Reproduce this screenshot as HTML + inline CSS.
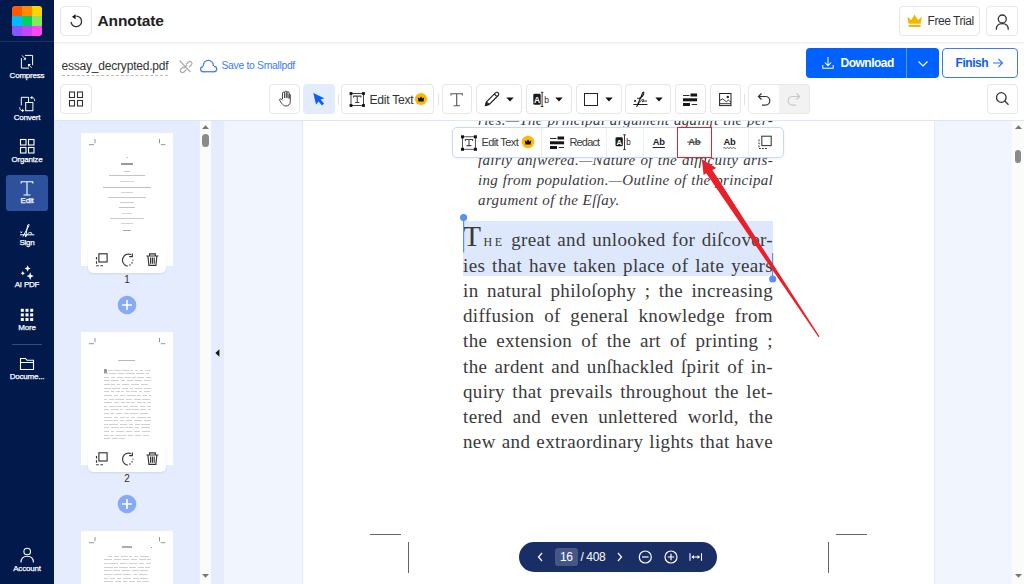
<!DOCTYPE html>
<html><head><meta charset="utf-8"><style>
*{box-sizing:border-box;margin:0;padding:0}
html,body{width:1024px;height:584px;overflow:hidden;background:#fff;font-family:"Liberation Sans",sans-serif;position:relative}
.a{position:absolute}
svg{position:absolute;overflow:visible}
#side{left:0;top:0;width:54px;height:584px;background:#01194b}
.logo{left:12px;top:6px;width:30px;height:30px;border-radius:3px;overflow:hidden}
.logo i{position:absolute;width:10px;height:10px}
.sl{position:absolute;left:0;width:54px;text-align:center;color:#fff;font-size:8px;line-height:10px;letter-spacing:-0.2px;-webkit-text-stroke:0.25px #fff}
.btn{position:absolute;border:1px solid #e6e6e6;border-radius:4px;background:#fff}
.t{position:absolute;white-space:nowrap}
.body{position:absolute;left:160px;width:310px;white-space:nowrap;font-family:"Liberation Serif",serif;font-size:19px;letter-spacing:0.35px;color:#3a3a3a;text-align:justify;text-align-last:justify;line-height:25px}
.ital{position:absolute;left:175px;width:295px;white-space:nowrap;font-family:"Liberation Serif",serif;font-style:italic;font-size:15px;letter-spacing:0.3px;color:#3a3a3a;text-align:justify;text-align-last:justify;line-height:20px}
</style></head><body>
<div id="side" class="a">
<div class="logo a">
<i style="left:0;top:0;background:#ff5a00"></i><i style="left:10px;top:0;background:#ff8c00"></i><i style="left:20px;top:0;background:#ffd400"></i>
<i style="left:0;top:10px;background:#00bcff"></i><i style="left:10px;top:10px;background:#00d062"></i><i style="left:20px;top:10px;background:#86e85a"></i>
<i style="left:0;top:20px;background:#8a55ff"></i><i style="left:10px;top:20px;background:#c845ff"></i><i style="left:20px;top:20px;background:#ff45f5"></i>
</div>
<div class="a" style="left:0;top:41px;width:54px;height:1px;background:#1f3261"></div>
<div class="a" style="left:6px;top:175px;width:42px;height:36px;border-radius:3px;background:#2e519d"></div>
<svg width="54" height="584" style="left:0;top:0" stroke="#fff" fill="none" stroke-width="1.1">
<!-- compress -->
<path d="M25 55.4H32.6V65.2M21.4 58.2V68.1H29" stroke-width="1"/>
<path d="M22.1 55.4L25.4 59.2" stroke-width="0.9"/><path d="M23.2 59.8H25.8V57.2Z" fill="#fff" stroke="none"/>
<path d="M31.7 67.8L28.4 64.5" stroke-width="0.9"/><path d="M30.9 64H28V66.9Z" fill="#fff" stroke="none"/>
<!-- convert -->
<path d="M21.3 105.4V97.3H28.6V102.5" stroke-width="1"/>
<rect x="25.7" y="102.5" width="7.2" height="8.2" stroke-width="1"/>
<path d="M34.6 101C34.6 98.7 33.8 97.6 32.2 97.6" stroke-width="0.9"/><path d="M32.3 95.9V99.3L29.9 97.6Z" fill="#fff" stroke="none"/>
<path d="M19.7 107.2C19.7 109.5 20.5 110.6 22.1 110.6" stroke-width="0.9"/><path d="M22 108.9V112.3L24.4 110.6Z" fill="#fff" stroke="none"/>
<!-- organize -->
<rect x="20.5" y="139.5" width="5.5" height="5.5"/><rect x="28.5" y="139.5" width="5.5" height="5.5"/>
<rect x="20.5" y="147.5" width="5.5" height="5.5"/><rect x="28.5" y="147.5" width="5.5" height="5.5"/>
<!-- edit T -->
<path d="M21.2 183.5V181.8H32.8V183.5M27 181.8V195M23.5 195H30.5"/>
<!-- sign -->
<path d="M20 234.8H34.3" stroke-width="1"/>
<path d="M23 236.5C25 233 27 229 29 225.5C29.5 224.3 28.3 223.8 27.8 225C27 228 26.5 233 25.5 237C27 234 29 232 31 232.5C32.5 233 31.5 234.5 30.5 234" stroke-width="1"/>
<path d="M20.5 231.5L22 233M22 231.5L20.5 233" stroke-width="0.8"/>
<!-- more dots -->
<g fill="#fff" stroke="none">
<rect x="20.8" y="308.8" width="3" height="3"/><rect x="25.5" y="308.8" width="3" height="3"/><rect x="30.2" y="308.8" width="3" height="3"/>
<rect x="20.8" y="313.4" width="3" height="3"/><rect x="25.5" y="313.4" width="3" height="3"/><rect x="30.2" y="313.4" width="3" height="3"/>
<rect x="20.8" y="318" width="3" height="3"/><rect x="25.5" y="318" width="3" height="3"/><rect x="30.2" y="318" width="3" height="3"/>
<!-- sparkles -->
<path d="M27.6 265.3L28.5 267.6L30.6 268.5L28.5 269.4L27.6 271.7L26.7 269.4L24.6 268.5L26.7 267.6Z"/>
<path d="M22.8 271L23.5 272.6L25 273.3L23.5 274L22.8 275.6L22.1 274L20.6 273.3L22.1 272.6Z"/>
<path d="M30.2 272.3L31.2 275L33.8 276.1L31.2 277.2L30.2 279.9L29.2 277.2L26.6 276.1L29.2 275Z"/>
</g>
<!-- folder -->
<path d="M20.5 369.5V358.5H25.5L27 360.3H33.5V369.5Z M20.5 362.5H33.5"/>
<!-- account -->
<circle cx="27.2" cy="551.5" r="3.3"/>
<path d="M21 562.5C21 558.5 23.5 556.3 27.2 556.3C30.9 556.3 33.4 558.5 33.4 562.5"/>
</svg>
<div class="a" style="left:12px;top:344px;width:30px;height:1px;background:#3a4a75"></div>
<div class="sl" style="top:70.6px">Compress</div>
<div class="sl" style="top:112.6px">Convert</div>
<div class="sl" style="top:154.8px">Organize</div>
<div class="sl" style="top:196.2px">Edit</div>
<div class="sl" style="top:238.4px">Sign</div>
<div class="sl" style="top:280.4px">AI PDF</div>
<div class="sl" style="top:322.7px">More</div>
<div class="sl" style="top:371.9px">Docume...</div>
<div class="sl" style="top:563.7px">Account</div>
</div>
<div class="a" style="left:54px;top:0;width:970px;height:43px;background:#fff;border-bottom:1px solid #efefef"></div>
<div class="a" style="left:54px;top:43px;width:970px;height:3px;background:linear-gradient(#f6f6f6,#fff)"></div>
<div class="btn" style="left:60px;top:6px;width:32px;height:30px"></div>
<svg width="32" height="30" style="left:60px;top:6px">
<path d="M11 15.9A5.3 5.3 0 1 0 16.2 10.1" stroke="#333" stroke-width="1.3" fill="none"/>
<path d="M12 10.8L15.6 8.3V13.3Z" fill="#111"/></svg>
<div class="t" style="left:97.5px;top:10.6px;font-size:15.5px;line-height:20px;font-weight:bold;letter-spacing:-0.1px;color:#222">Annotate</div>
<div class="btn" style="left:899px;top:6px;width:81px;height:30px"></div>
<svg width="16" height="14" style="left:907px;top:14px">
<path d="M0.3 2.8L4.3 6L7.6 0.6L10.9 6L14.9 2.8L13.6 9.8H1.6Z" fill="#f7b500"/>
<rect x="1.6" y="10.9" width="12" height="2.1" fill="#f7b500"/></svg>
<div class="t" style="left:927.5px;top:13px;font-size:12px;line-height:16px;letter-spacing:-0.45px;color:#333">Free Trial</div>
<div class="btn" style="left:986px;top:6px;width:32px;height:30px"></div>
<svg width="32" height="30" style="left:986px;top:6px" stroke="#333" stroke-width="1.3" fill="none">
<circle cx="16.3" cy="13" r="4"/><path d="M10.3 23.8C10.3 20 12.6 17.7 16.3 17.7C20 17.7 22.3 20 22.3 23.8"/></svg>
<div class="t" style="left:61.5px;top:58px;font-size:12px;line-height:16px;letter-spacing:-0.2px;color:#333">essay_decrypted.pdf</div>
<div class="a" style="left:62px;top:75px;width:106px;height:0;border-top:1px dashed #bbb"></div>
<svg width="16" height="16" style="left:177px;top:58px" stroke="#aaa" stroke-width="1.1" fill="none">
<path d="M2.5 2.5L13.5 14"/>
<path d="M6.5 8.5L4 11A2 2 0 0 0 7 14L9.5 11.5"/><path d="M9 6.5L11.5 4A2 2 0 0 1 14.3 7L12 9.3"/><path d="M6.5 10.5L10 7"/></svg>
<svg width="20" height="16" style="left:199px;top:59.3px"><g fill="#3b7cf8"><circle cx="9.3" cy="6.4" r="5.65"/><circle cx="15.0" cy="10.0" r="3.35"/><circle cx="4.2" cy="10.2" r="3.15"/><rect x="4.2" y="7" width="10.8" height="6.35"/></g><g fill="#fff"><circle cx="9.3" cy="6.4" r="4.4"/><circle cx="15.0" cy="10.0" r="2.1"/><circle cx="4.2" cy="10.2" r="1.9"/><rect x="4.2" y="7" width="10.8" height="5.1"/></g></svg>
<div class="t" style="left:221.5px;top:59px;font-size:10.4px;line-height:14px;letter-spacing:-0.32px;color:#3b7cf8">Save to Smallpdf</div>
<div class="a" style="left:806px;top:48px;width:133px;height:30px;border-radius:4px;background:#0061fe"></div>
<div class="a" style="left:906px;top:48px;width:1px;height:30px;background:#5b95ff"></div>
<svg width="14" height="14" style="left:821px;top:56px" stroke="#fff" stroke-width="1.05" fill="none">
<path d="M7 1V9.5M3.8 6.5L7 9.7L10.2 6.5M1.8 9V12.3H12.2V9"/></svg>
<div class="t" style="left:840.5px;top:55px;font-size:12px;line-height:16px;font-weight:bold;letter-spacing:-0.5px;color:#fff">Download</div>
<svg width="12" height="8" style="left:917px;top:60px" stroke="#fff" stroke-width="1.2" fill="none"><path d="M1.5 1.5L6 6L10.5 1.5"/></svg>
<div class="a" style="left:942px;top:48px;width:76px;height:30px;border-radius:4px;border:1px solid #3d7af6;background:#fff"></div>
<div class="t" style="left:955.5px;top:55px;font-size:12px;line-height:16px;font-weight:bold;letter-spacing:-0.45px;color:#0d5cf0">Finish</div>
<svg width="12" height="10" style="left:991.8px;top:57.5px" stroke="#2f6ff5" stroke-width="1.1" fill="none"><path d="M1 5H10.5M6.5 1L10.5 5L6.5 9"/></svg>
<div class="btn" style="left:60px;top:84px;width:32px;height:30px;"></div>
<svg width="32" height="30" style="left:60px;top:84px" stroke="#333" stroke-width="1.1" fill="none">
<rect x="9.5" y="8" width="5" height="5.5"/><rect x="17.5" y="8" width="5" height="5.5"/>
<rect x="9.5" y="16.5" width="5" height="5.5"/><rect x="17.5" y="16.5" width="5" height="5.5"/></svg>
<div class="btn" style="left:268.5px;top:84px;width:31.0px;height:30px;"></div>
<svg width="31" height="30" style="left:268.5px;top:84px" stroke="#444" stroke-width="1" fill="none">
<path d="M13.5 15V9.2A1.1 1.1 0 0 1 15.7 9.2V14M15.7 14V8.2A1.1 1.1 0 0 1 17.9 8.2V14M17.9 14V8.8A1.1 1.1 0 0 1 20.1 8.8V14.5M20.1 14.5V10.5A1.1 1.1 0 0 1 21.3 10.5V17.5C21.3 20.5 19.3 22 17 22C15 22 14 21 12.5 19.2L10.6 16.2A1.1 1.1 0 0 1 12.3 15L13.5 16.3"/></svg>
<div class="a" style="left:303px;top:84px;width:31.5px;height:30px;border-radius:4px;background:#e3ecfd"></div>
<svg width="32" height="30" style="left:303px;top:84px"><path d="M10.3 9L21.3 14.2L17.6 15.6L21 19.6L19 21.5L15.6 17.5L13 20.5Z" fill="#0a5efc"/></svg>
<div class="a" style="left:337.5px;top:93.5px;width:1px;height:11.5px;background:#e2e2e2"></div>
<div class="btn" style="left:341px;top:84px;width:93px;height:30px;"></div>
<svg width="20" height="16" style="left:348px;top:91px">
<rect x="3" y="2.5" width="12.5" height="12" stroke="#333" stroke-width="0.9" fill="none"/>
<g fill="#111"><rect x="1.6" y="1.1" width="2.8" height="2.8"/><rect x="14.1" y="1.1" width="2.8" height="2.8"/><rect x="1.6" y="13.1" width="2.8" height="2.8"/><rect x="14.1" y="13.1" width="2.8" height="2.8"/></g>
<path d="M5.5 6.6V5.1H13V6.6M9.25 5.1V11.5M7.1 11.5H11.4" stroke="#444" stroke-width="1.05" fill="none"/></svg>
<div class="t" style="left:369.5px;top:91.5px;font-size:12.2px;line-height:16px;letter-spacing:-0.3px;color:#333">Edit Text</div>
<svg width="14" height="14" style="left:414px;top:92.3px"><circle cx="7" cy="7" r="6.1" fill="#ffb700"/>
<path d="M3.8 5.2L5.4 6.6L7 4.4L8.6 6.6L10.2 5.2L9.6 9.6H4.4Z" fill="#111"/></svg>
<div class="a" style="left:437.5px;top:93.5px;width:1px;height:11.5px;background:#e2e2e2"></div>
<div class="btn" style="left:441.5px;top:84px;width:30.5px;height:30px;"></div>
<svg width="31" height="30" style="left:441.5px;top:84px" stroke="#555" stroke-width="1.1" fill="none">
<path d="M9 11.5V9.7H20.4V11.5M14.7 9.7V21.7M11.6 21.7H18"/></svg>
<div class="btn" style="left:475.5px;top:84px;width:46.0px;height:30px;"></div>
<svg width="16" height="16" style="left:483.5px;top:91px" stroke="#222" stroke-width="1.1" fill="none">
<path d="M1.5 14.5L2.5 10.8L11.5 1.8A1.4 1.4 0 0 1 14.2 4.5L5.2 13.5Z M10.3 3L13 5.7 M2.5 10.8L5.2 13.5"/><path d="M1.5 14.5L2.2 12L4 13.8Z" fill="#222"/></svg>
<svg width="10" height="6" style="left:504.5px;top:97.1px"><path d="M1.3 0.5H8.7L5 4.5Z" fill="#111"/></svg>
<div class="btn" style="left:525.5px;top:84px;width:46.0px;height:30px;"></div>
<svg width="20" height="18" style="left:532px;top:91px">
<rect x="1.3" y="2.8" width="7.4" height="11" rx="1.3" fill="#1a1a1a"/>
<text x="5" y="11.8" font-family="Liberation Sans" font-weight="bold" font-size="8.5" fill="#fff" text-anchor="middle">A</text>
<path d="M10.1 1.3V15.5M8.8 1.3H11.4M8.8 15.5H11.4" stroke="#222" stroke-width="0.9" fill="none"/>
<text x="12.3" y="11.8" font-family="Liberation Sans" font-size="8.5" fill="#222">b</text></svg>
<svg width="10" height="6" style="left:554.2px;top:97.1px"><path d="M1.3 0.5H8.7L5 4.5Z" fill="#111"/></svg>
<div class="btn" style="left:575.5px;top:84px;width:46.0px;height:30px;"></div>
<div class="a" style="left:584px;top:92.8px;width:13.8px;height:13.2px;border:1.2px solid #222"></div>
<svg width="10" height="6" style="left:603.8px;top:97.1px"><path d="M1.3 0.5H8.7L5 4.5Z" fill="#111"/></svg>
<div class="btn" style="left:625px;top:84px;width:46px;height:30px;"></div>
<svg width="20" height="20" style="left:630px;top:89px" stroke="#1a1a1a" fill="none" stroke-linecap="round">
<path d="M3.8 15.5H17" stroke-width="1.1"/>
<path d="M4.4 11.2L5.8 12.6M5.8 11.2L4.4 12.6" stroke-width="0.9"/>
<path d="M6.8 17.6C8.2 14 10.8 8.5 12.3 4.6C13.2 2.3 14.4 3 13.6 5.2C12.8 7.3 11.3 8.8 9.6 9.3" stroke-width="1.1"/>
<path d="M7.3 9.3H11" stroke-width="0.9"/>
<path d="M8.3 15C9.6 12.8 11.2 11 12.8 10.6C14 10.3 13.8 11.6 12.2 12.8C13.8 12.4 15 11.6 16.6 12" stroke-width="1"/>
</svg>
<svg width="10" height="6" style="left:653.6px;top:97.1px"><path d="M1.3 0.5H8.7L5 4.5Z" fill="#111"/></svg>
<div class="btn" style="left:674.5px;top:84px;width:31.0px;height:30px;"></div>
<svg width="16" height="14" style="left:682px;top:92px" fill="#151515">
<rect x="1" y="3.1" width="6.5" height="0.9"/><rect x="8.5" y="1.5" width="6.6" height="3"/>
<rect x="1" y="6.3" width="14.1" height="3"/>
<rect x="1" y="11" width="7" height="3"/><rect x="9.7" y="12.1" width="5.4" height="0.9"/></svg>
<div class="btn" style="left:709.5px;top:84px;width:31.0px;height:30px;"></div>
<svg width="16" height="16" style="left:717px;top:91px" stroke="#222" stroke-width="1" fill="none">
<rect x="2.6" y="2.5" width="11.4" height="12.1"/>
<path d="M2.6 9.6L5.8 7.8L9.3 10.8L11.4 9.1L14 11.2M2.6 12.7H14" stroke-width="0.9"/><circle cx="10.8" cy="6" r="1.2" fill="#222" stroke="none"/></svg>
<div class="a" style="left:743.5px;top:93.5px;width:1px;height:11.5px;background:#e2e2e2"></div>
<div class="a" style="left:747.5px;top:84px;width:62px;height:30px;border-radius:4px;border:1px solid #e8e8e8;background:#f2f2f2;overflow:hidden"><div class="a" style="left:0;top:0;width:30.5px;height:29px;background:#fff"></div></div>
<svg width="62" height="30" style="left:747.5px;top:84px" stroke-width="1.2" fill="none">
<path d="M10.5 12.5H17.5A4.3 4.3 0 0 1 17.5 21.1H14" stroke="#333"/><path d="M13.5 9.5L10.4 12.5L13.5 15.5" stroke="#333"/>
<path d="M51.5 12.5H44.5A4.3 4.3 0 0 0 44.5 21.1H48" stroke="#c8c8c8"/><path d="M48.5 9.5L51.6 12.5L48.5 15.5" stroke="#c8c8c8"/></svg>
<div class="btn" style="left:986.5px;top:84px;width:31.5px;height:30px;"></div>
<svg width="32" height="30" style="left:986.5px;top:84px" stroke="#333" stroke-width="1.3" fill="none">
<circle cx="14.3" cy="13.5" r="4.8"/><path d="M17.8 17L21.5 20.7"/></svg>
<div class="a" style="left:54px;top:120px;width:146px;height:464px;background:#e4ecfd"></div>
<div class="a" style="left:200px;top:120px;width:11px;height:464px;background:#fbfbfb"></div>
<div class="a" style="left:211px;top:120px;width:13px;height:464px;background:#e4ecfd"></div>
<div class="a" style="left:224px;top:120px;width:788px;height:464px;background:#f0f5fe"></div>
<div class="a" style="left:302px;top:120px;width:1px;height:464px;background:#e6ecf7"></div>
<div class="a" style="left:934px;top:120px;width:1px;height:464px;background:#e6ecf7"></div>
<div class="a" style="left:1012px;top:120px;width:12px;height:464px;background:#fbfbfb"></div>
<svg width="12" height="8" style="left:200px;top:123px"><path d="M2 6H9L5.5 2.3Z" fill="#777"/></svg>
<div class="a" style="left:202px;top:133.5px;width:6.5px;height:13.5px;border-radius:3.5px;background:#8a8a8a"></div>
<svg width="12" height="8" style="left:200px;top:572px"><path d="M2 2H9L5.5 5.7Z" fill="#777"/></svg>
<svg width="12" height="8" style="left:1012.5px;top:123px"><path d="M2 6H9L5.5 2.3Z" fill="#777"/></svg>
<div class="a" style="left:1014.5px;top:149.5px;width:6.5px;height:13px;border-radius:3.5px;background:#8a8a8a"></div>
<svg width="12" height="8" style="left:1012.5px;top:572px"><path d="M2 2H9L5.5 5.7Z" fill="#777"/></svg>
<svg width="8" height="10" style="left:213px;top:347.5px"><path d="M6.4 1.3V8.7L2.4 5Z" fill="#111"/></svg>
<div class="a" style="left:81px;top:133.2px;width:92.3px;height:132.5px;background:#fff"></div>
<svg width="93" height="20" style="left:81px;top:133.2px" stroke="#888" stroke-width="0.9" fill="none">
<path d="M7.9 11.7H13M14 6V10.3"/><path d="M84.3 11.7H79.8M78.5 6V10.3"/></svg>
<div class="a" style="left:125.8px;top:156.8px;width:2.5px;height:0.8px;background:#ccc"></div>
<div class="a" style="left:121.3px;top:163.4px;width:11.3px;height:1.3px;background:#999"></div>
<div class="a" style="left:124.0px;top:170.5px;width:6px;height:0.8px;background:#ccc"></div>
<div class="a" style="left:109.0px;top:175.4px;width:36px;height:1px;background:#c4c4c4"></div>
<div class="a" style="left:120.0px;top:180.9px;width:14px;height:0.8px;background:#d4d4d4"></div>
<div class="a" style="left:103.0px;top:186.5px;width:48px;height:1px;background:#bdbdbd"></div>
<div class="a" style="left:121.0px;top:192.2px;width:12px;height:0.8px;background:#d4d4d4"></div>
<div class="a" style="left:108.0px;top:196.9px;width:38px;height:0.8px;background:#c8c8c8"></div>
<div class="a" style="left:120.0px;top:202.3px;width:14px;height:0.8px;background:#cccccc"></div>
<div class="a" style="left:119.0px;top:206.5px;width:16px;height:0.8px;background:#c4c4c4"></div>
<div class="a" style="left:122.0px;top:213px;width:10px;height:0.8px;background:#d4d4d4"></div>
<div class="a" style="left:110.0px;top:217.9px;width:34px;height:0.8px;background:#cccccc"></div>
<div class="a" style="left:121.0px;top:222.5px;width:12px;height:0.8px;background:#d4d4d4"></div>
<div class="a" style="left:123.0px;top:230.3px;width:8px;height:1px;background:#aaa"></div>
<div class="a" style="left:87.6px;top:245.6px;width:78.4px;height:27.2px;border-radius:5px;background:#fff;box-shadow:0 1px 2px rgba(60,80,130,0.12)"></div>
<svg width="79" height="28" style="left:87.6px;top:245.6px" stroke="#333" stroke-width="1.15" fill="none">
<rect x="10.9" y="7.8" width="8.2" height="8.2"/><path d="M8.5 11V19.7H16.2" stroke-dasharray="2.6 1.6"/>
<path d="M42.9 8.5A6.1 6.1 0 1 0 38.4 19.9" />
<path d="M38.4 19.9A6.1 6.1 0 0 0 44.9 13.8" stroke-dasharray="1.4 1.6"/><path d="M44.3 7.5V10.6H41.2" stroke-width="1.2"/>
<path d="M58.4 10H70.4M61.6 10V7.8H67.3V10M59.9 10L60.9 19.4H67.9L68.9 10M62.6 11.5V17.8M64.4 11.5V17.8M66.2 11.5V17.8"/></svg>
<div class="t" style="left:117px;top:273.7px;width:20px;text-align:center;font-size:10px;line-height:12px;color:#333">1</div>
<svg width="20" height="20" style="left:117px;top:295.2px"><circle cx="10" cy="10" r="9.3" fill="#86a9f8"/>
<path d="M10 5V15M5 10H15" stroke="#fff" stroke-width="1.6"/></svg>
<div class="a" style="left:81px;top:332.2px;width:92.3px;height:132.5px;background:#fff"></div>
<svg width="93" height="20" style="left:81px;top:332.2px" stroke="#888" stroke-width="0.9" fill="none">
<path d="M7.9 11.7H13M14 6V10.3"/><path d="M84.3 11.7H79.8M78.5 6V10.3"/></svg>
<div class="a" style="left:118.4px;top:359.7px;width:17px;height:1.2px;background:#b8b8b8"></div>
<div class="a" style="left:104px;top:368.7px;width:3.2px;height:4.2px;background:#999"></div>
<div class="a" style="left:108.0px;top:369.5px;width:4.9px;height:1.1px;background:#d0d0d0"></div>
<div class="a" style="left:114.3px;top:369.5px;width:6.9px;height:1.1px;background:#d0d0d0"></div>
<div class="a" style="left:122.4px;top:369.5px;width:6.2px;height:1.1px;background:#d0d0d0"></div>
<div class="a" style="left:130.1px;top:369.5px;width:3.3px;height:1.1px;background:#d0d0d0"></div>
<div class="a" style="left:135.1px;top:369.5px;width:3.2px;height:1.1px;background:#d0d0d0"></div>
<div class="a" style="left:139.9px;top:369.5px;width:3.4px;height:1.1px;background:#d0d0d0"></div>
<div class="a" style="left:144.6px;top:369.5px;width:5.5px;height:1.1px;background:#d0d0d0"></div>
<div class="a" style="left:104.0px;top:373.1px;width:3.7px;height:1.1px;background:#d0d0d0"></div>
<div class="a" style="left:109.1px;top:373.1px;width:6.8px;height:1.1px;background:#d0d0d0"></div>
<div class="a" style="left:117.8px;top:373.1px;width:6.5px;height:1.1px;background:#d0d0d0"></div>
<div class="a" style="left:125.8px;top:373.1px;width:8.9px;height:1.1px;background:#d0d0d0"></div>
<div class="a" style="left:135.9px;top:373.1px;width:8.2px;height:1.1px;background:#d0d0d0"></div>
<div class="a" style="left:145.5px;top:373.1px;width:3.9px;height:1.1px;background:#d0d0d0"></div>
<div class="a" style="left:104.0px;top:376.7px;width:4.9px;height:1.1px;background:#d0d0d0"></div>
<div class="a" style="left:110.7px;top:376.7px;width:4.1px;height:1.1px;background:#d0d0d0"></div>
<div class="a" style="left:116.5px;top:376.7px;width:6.8px;height:1.1px;background:#d0d0d0"></div>
<div class="a" style="left:124.8px;top:376.7px;width:6.3px;height:1.1px;background:#d0d0d0"></div>
<div class="a" style="left:132.3px;top:376.7px;width:3.4px;height:1.1px;background:#d0d0d0"></div>
<div class="a" style="left:137.0px;top:376.7px;width:7.1px;height:1.1px;background:#d0d0d0"></div>
<div class="a" style="left:145.7px;top:376.7px;width:4.9px;height:1.1px;background:#d0d0d0"></div>
<div class="a" style="left:104.0px;top:380.4px;width:5.7px;height:1.1px;background:#d0d0d0"></div>
<div class="a" style="left:111.2px;top:380.4px;width:7.8px;height:1.1px;background:#d0d0d0"></div>
<div class="a" style="left:120.7px;top:380.4px;width:4.5px;height:1.1px;background:#d0d0d0"></div>
<div class="a" style="left:126.8px;top:380.4px;width:6.2px;height:1.1px;background:#d0d0d0"></div>
<div class="a" style="left:134.9px;top:380.4px;width:7.4px;height:1.1px;background:#d0d0d0"></div>
<div class="a" style="left:143.7px;top:380.4px;width:7.0px;height:1.1px;background:#d0d0d0"></div>
<div class="a" style="left:104.0px;top:384.0px;width:5.5px;height:1.1px;background:#d0d0d0"></div>
<div class="a" style="left:111.3px;top:384.0px;width:3.9px;height:1.1px;background:#d0d0d0"></div>
<div class="a" style="left:116.8px;top:384.0px;width:3.2px;height:1.1px;background:#d0d0d0"></div>
<div class="a" style="left:121.8px;top:384.0px;width:7.6px;height:1.1px;background:#d0d0d0"></div>
<div class="a" style="left:131.0px;top:384.0px;width:8.3px;height:1.1px;background:#d0d0d0"></div>
<div class="a" style="left:140.7px;top:384.0px;width:7.2px;height:1.1px;background:#d0d0d0"></div>
<div class="a" style="left:104.0px;top:387.6px;width:6.5px;height:1.1px;background:#d0d0d0"></div>
<div class="a" style="left:112.0px;top:387.6px;width:8.0px;height:1.1px;background:#d0d0d0"></div>
<div class="a" style="left:122.0px;top:387.6px;width:5.8px;height:1.1px;background:#d0d0d0"></div>
<div class="a" style="left:129.6px;top:387.6px;width:3.4px;height:1.1px;background:#d0d0d0"></div>
<div class="a" style="left:134.7px;top:387.6px;width:6.9px;height:1.1px;background:#d0d0d0"></div>
<div class="a" style="left:143.6px;top:387.6px;width:7.1px;height:1.1px;background:#d0d0d0"></div>
<div class="a" style="left:104.0px;top:391.2px;width:5.3px;height:1.1px;background:#d0d0d0"></div>
<div class="a" style="left:111.0px;top:391.2px;width:3.1px;height:1.1px;background:#d0d0d0"></div>
<div class="a" style="left:115.8px;top:391.2px;width:4.0px;height:1.1px;background:#d0d0d0"></div>
<div class="a" style="left:121.1px;top:391.2px;width:3.4px;height:1.1px;background:#d0d0d0"></div>
<div class="a" style="left:126.2px;top:391.2px;width:3.8px;height:1.1px;background:#d0d0d0"></div>
<div class="a" style="left:131.4px;top:391.2px;width:5.3px;height:1.1px;background:#d0d0d0"></div>
<div class="a" style="left:138.6px;top:391.2px;width:3.5px;height:1.1px;background:#d0d0d0"></div>
<div class="a" style="left:143.7px;top:391.2px;width:6.3px;height:1.1px;background:#d0d0d0"></div>
<div class="a" style="left:104.0px;top:394.8px;width:7.9px;height:1.1px;background:#d0d0d0"></div>
<div class="a" style="left:113.8px;top:394.8px;width:4.7px;height:1.1px;background:#d0d0d0"></div>
<div class="a" style="left:120.0px;top:394.8px;width:5.2px;height:1.1px;background:#d0d0d0"></div>
<div class="a" style="left:127.1px;top:394.8px;width:8.7px;height:1.1px;background:#d0d0d0"></div>
<div class="a" style="left:137.1px;top:394.8px;width:4.1px;height:1.1px;background:#d0d0d0"></div>
<div class="a" style="left:142.6px;top:394.8px;width:4.4px;height:1.1px;background:#d0d0d0"></div>
<div class="a" style="left:148.6px;top:394.8px;width:2.1px;height:1.1px;background:#d0d0d0"></div>
<div class="a" style="left:104.0px;top:398.5px;width:3.0px;height:1.1px;background:#d0d0d0"></div>
<div class="a" style="left:108.6px;top:398.5px;width:5.2px;height:1.1px;background:#d0d0d0"></div>
<div class="a" style="left:115.4px;top:398.5px;width:8.7px;height:1.1px;background:#d0d0d0"></div>
<div class="a" style="left:125.9px;top:398.5px;width:6.1px;height:1.1px;background:#d0d0d0"></div>
<div class="a" style="left:133.7px;top:398.5px;width:7.1px;height:1.1px;background:#d0d0d0"></div>
<div class="a" style="left:142.0px;top:398.5px;width:8.4px;height:1.1px;background:#d0d0d0"></div>
<div class="a" style="left:104.0px;top:402.1px;width:8.2px;height:1.1px;background:#d0d0d0"></div>
<div class="a" style="left:114.1px;top:402.1px;width:5.4px;height:1.1px;background:#d0d0d0"></div>
<div class="a" style="left:121.0px;top:402.1px;width:3.6px;height:1.1px;background:#d0d0d0"></div>
<div class="a" style="left:126.3px;top:402.1px;width:3.4px;height:1.1px;background:#d0d0d0"></div>
<div class="a" style="left:130.9px;top:402.1px;width:4.3px;height:1.1px;background:#d0d0d0"></div>
<div class="a" style="left:136.5px;top:402.1px;width:5.0px;height:1.1px;background:#d0d0d0"></div>
<div class="a" style="left:142.8px;top:402.1px;width:3.0px;height:1.1px;background:#d0d0d0"></div>
<div class="a" style="left:147.1px;top:402.1px;width:3.6px;height:1.1px;background:#d0d0d0"></div>
<div class="a" style="left:104.0px;top:405.7px;width:3.2px;height:1.1px;background:#d0d0d0"></div>
<div class="a" style="left:109.1px;top:405.7px;width:6.7px;height:1.1px;background:#d0d0d0"></div>
<div class="a" style="left:117.1px;top:405.7px;width:4.5px;height:1.1px;background:#d0d0d0"></div>
<div class="a" style="left:123.0px;top:405.7px;width:5.2px;height:1.1px;background:#d0d0d0"></div>
<div class="a" style="left:129.5px;top:405.7px;width:8.1px;height:1.1px;background:#d0d0d0"></div>
<div class="a" style="left:139.6px;top:405.7px;width:5.8px;height:1.1px;background:#d0d0d0"></div>
<div class="a" style="left:147.0px;top:405.7px;width:3.5px;height:1.1px;background:#d0d0d0"></div>
<div class="a" style="left:104.0px;top:409.3px;width:5.1px;height:1.1px;background:#d0d0d0"></div>
<div class="a" style="left:110.5px;top:409.3px;width:8.0px;height:1.1px;background:#d0d0d0"></div>
<div class="a" style="left:119.8px;top:409.3px;width:3.1px;height:1.1px;background:#d0d0d0"></div>
<div class="a" style="left:124.9px;top:409.3px;width:6.2px;height:1.1px;background:#d0d0d0"></div>
<div class="a" style="left:132.4px;top:409.3px;width:6.3px;height:1.1px;background:#d0d0d0"></div>
<div class="a" style="left:139.8px;top:409.3px;width:6.2px;height:1.1px;background:#d0d0d0"></div>
<div class="a" style="left:148.0px;top:409.3px;width:2.7px;height:1.1px;background:#d0d0d0"></div>
<div class="a" style="left:104.0px;top:412.9px;width:4.6px;height:1.1px;background:#d0d0d0"></div>
<div class="a" style="left:110.1px;top:412.9px;width:4.0px;height:1.1px;background:#d0d0d0"></div>
<div class="a" style="left:115.9px;top:412.9px;width:6.2px;height:1.1px;background:#d0d0d0"></div>
<div class="a" style="left:123.9px;top:412.9px;width:5.0px;height:1.1px;background:#d0d0d0"></div>
<div class="a" style="left:130.3px;top:412.9px;width:7.9px;height:1.1px;background:#d0d0d0"></div>
<div class="a" style="left:140.1px;top:412.9px;width:8.1px;height:1.1px;background:#d0d0d0"></div>
<div class="a" style="left:104.0px;top:416.6px;width:7.9px;height:1.1px;background:#d0d0d0"></div>
<div class="a" style="left:113.7px;top:416.6px;width:4.4px;height:1.1px;background:#d0d0d0"></div>
<div class="a" style="left:119.7px;top:416.6px;width:5.1px;height:1.1px;background:#d0d0d0"></div>
<div class="a" style="left:126.0px;top:416.6px;width:3.2px;height:1.1px;background:#d0d0d0"></div>
<div class="a" style="left:130.6px;top:416.6px;width:4.6px;height:1.1px;background:#d0d0d0"></div>
<div class="a" style="left:136.9px;top:416.6px;width:8.7px;height:1.1px;background:#d0d0d0"></div>
<div class="a" style="left:147.2px;top:416.6px;width:3.5px;height:1.1px;background:#d0d0d0"></div>
<div class="a" style="left:104.0px;top:420.2px;width:8.7px;height:1.1px;background:#d0d0d0"></div>
<div class="a" style="left:114.2px;top:420.2px;width:4.3px;height:1.1px;background:#d0d0d0"></div>
<div class="a" style="left:119.9px;top:420.2px;width:4.2px;height:1.1px;background:#d0d0d0"></div>
<div class="a" style="left:125.5px;top:420.2px;width:6.7px;height:1.1px;background:#d0d0d0"></div>
<div class="a" style="left:134.1px;top:420.2px;width:8.0px;height:1.1px;background:#d0d0d0"></div>
<div class="a" style="left:143.8px;top:420.2px;width:6.9px;height:1.1px;background:#d0d0d0"></div>
<div class="a" style="left:104.0px;top:423.8px;width:3.5px;height:1.1px;background:#d0d0d0"></div>
<div class="a" style="left:109.2px;top:423.8px;width:8.5px;height:1.1px;background:#d0d0d0"></div>
<div class="a" style="left:119.5px;top:423.8px;width:7.5px;height:1.1px;background:#d0d0d0"></div>
<div class="a" style="left:128.6px;top:423.8px;width:4.1px;height:1.1px;background:#d0d0d0"></div>
<div class="a" style="left:134.5px;top:423.8px;width:5.0px;height:1.1px;background:#d0d0d0"></div>
<div class="a" style="left:141.3px;top:423.8px;width:8.8px;height:1.1px;background:#d0d0d0"></div>
<div class="a" style="left:104.0px;top:427.4px;width:5.4px;height:1.1px;background:#d0d0d0"></div>
<div class="a" style="left:111.4px;top:427.4px;width:7.3px;height:1.1px;background:#d0d0d0"></div>
<div class="a" style="left:120.1px;top:427.4px;width:3.8px;height:1.1px;background:#d0d0d0"></div>
<div class="a" style="left:125.1px;top:427.4px;width:8.4px;height:1.1px;background:#d0d0d0"></div>
<div class="a" style="left:135.4px;top:427.4px;width:3.9px;height:1.1px;background:#d0d0d0"></div>
<div class="a" style="left:141.1px;top:427.4px;width:8.9px;height:1.1px;background:#d0d0d0"></div>
<div class="a" style="left:104.0px;top:431.0px;width:5.1px;height:1.1px;background:#d0d0d0"></div>
<div class="a" style="left:110.7px;top:431.0px;width:3.8px;height:1.1px;background:#d0d0d0"></div>
<div class="a" style="left:115.7px;top:431.0px;width:8.8px;height:1.1px;background:#d0d0d0"></div>
<div class="a" style="left:126.3px;top:431.0px;width:6.2px;height:1.1px;background:#d0d0d0"></div>
<div class="a" style="left:134.4px;top:431.0px;width:5.6px;height:1.1px;background:#d0d0d0"></div>
<div class="a" style="left:141.9px;top:431.0px;width:8.0px;height:1.1px;background:#d0d0d0"></div>
<div class="a" style="left:104.0px;top:434.7px;width:4.5px;height:1.1px;background:#d0d0d0"></div>
<div class="a" style="left:109.9px;top:434.7px;width:4.4px;height:1.1px;background:#d0d0d0"></div>
<div class="a" style="left:116.1px;top:434.7px;width:4.6px;height:1.1px;background:#d0d0d0"></div>
<div class="a" style="left:122.1px;top:434.7px;width:3.8px;height:1.1px;background:#d0d0d0"></div>
<div class="a" style="left:127.9px;top:434.7px;width:5.1px;height:1.1px;background:#d0d0d0"></div>
<div class="a" style="left:134.6px;top:434.7px;width:6.5px;height:1.1px;background:#d0d0d0"></div>
<div class="a" style="left:143.0px;top:434.7px;width:5.5px;height:1.1px;background:#d0d0d0"></div>
<div class="a" style="left:104.0px;top:438.3px;width:6.0px;height:1.1px;background:#d0d0d0"></div>
<div class="a" style="left:111.6px;top:438.3px;width:6.1px;height:1.1px;background:#d0d0d0"></div>
<div class="a" style="left:119.0px;top:438.3px;width:5.6px;height:1.1px;background:#d0d0d0"></div>
<div class="a" style="left:87.6px;top:444.6px;width:78.4px;height:27.2px;border-radius:5px;background:#fff;box-shadow:0 1px 2px rgba(60,80,130,0.12)"></div>
<svg width="79" height="28" style="left:87.6px;top:444.6px" stroke="#333" stroke-width="1.15" fill="none">
<rect x="10.9" y="7.8" width="8.2" height="8.2"/><path d="M8.5 11V19.7H16.2" stroke-dasharray="2.6 1.6"/>
<path d="M42.9 8.5A6.1 6.1 0 1 0 38.4 19.9" />
<path d="M38.4 19.9A6.1 6.1 0 0 0 44.9 13.8" stroke-dasharray="1.4 1.6"/><path d="M44.3 7.5V10.6H41.2" stroke-width="1.2"/>
<path d="M58.4 10H70.4M61.6 10V7.8H67.3V10M59.9 10L60.9 19.4H67.9L68.9 10M62.6 11.5V17.8M64.4 11.5V17.8M66.2 11.5V17.8"/></svg>
<div class="t" style="left:117px;top:472.7px;width:20px;text-align:center;font-size:10px;line-height:12px;color:#333">2</div>
<svg width="20" height="20" style="left:117px;top:494.2px"><circle cx="10" cy="10" r="9.3" fill="#86a9f8"/>
<path d="M10 5V15M5 10H15" stroke="#fff" stroke-width="1.6"/></svg>
<div class="a" style="left:81px;top:531.3px;width:92.3px;height:132.5px;background:#fff"></div>
<svg width="93" height="20" style="left:81px;top:531.3px" stroke="#888" stroke-width="0.9" fill="none">
<path d="M7.9 11.7H13M14 6V10.3"/><path d="M84.3 11.7H79.8M78.5 6V10.3"/></svg>
<div class="a" style="left:121.7px;top:546.3px;width:10.7px;height:1.3px;background:#aaa"></div>
<div class="a" style="left:151px;top:546.5px;width:1.2px;height:1.2px;background:#999"></div>
<div class="a" style="left:108.0px;top:555.8px;width:4.4px;height:1.1px;background:#d0d0d0"></div>
<div class="a" style="left:114.1px;top:555.8px;width:5.2px;height:1.1px;background:#d0d0d0"></div>
<div class="a" style="left:121.0px;top:555.8px;width:6.8px;height:1.1px;background:#d0d0d0"></div>
<div class="a" style="left:129.0px;top:555.8px;width:3.1px;height:1.1px;background:#d0d0d0"></div>
<div class="a" style="left:133.9px;top:555.8px;width:4.6px;height:1.1px;background:#d0d0d0"></div>
<div class="a" style="left:139.9px;top:555.8px;width:9.0px;height:1.1px;background:#d0d0d0"></div>
<div class="a" style="left:104.3px;top:559.4px;width:8.0px;height:1.1px;background:#d0d0d0"></div>
<div class="a" style="left:113.9px;top:559.4px;width:6.8px;height:1.1px;background:#d0d0d0"></div>
<div class="a" style="left:122.1px;top:559.4px;width:6.8px;height:1.1px;background:#d0d0d0"></div>
<div class="a" style="left:130.8px;top:559.4px;width:6.1px;height:1.1px;background:#d0d0d0"></div>
<div class="a" style="left:138.7px;top:559.4px;width:7.0px;height:1.1px;background:#d0d0d0"></div>
<div class="a" style="left:147.0px;top:559.4px;width:3.6px;height:1.1px;background:#d0d0d0"></div>
<div class="a" style="left:104.3px;top:563.0px;width:4.8px;height:1.1px;background:#d0d0d0"></div>
<div class="a" style="left:110.3px;top:563.0px;width:8.2px;height:1.1px;background:#d0d0d0"></div>
<div class="a" style="left:120.1px;top:563.0px;width:7.3px;height:1.1px;background:#d0d0d0"></div>
<div class="a" style="left:129.3px;top:563.0px;width:7.3px;height:1.1px;background:#d0d0d0"></div>
<div class="a" style="left:138.5px;top:563.0px;width:5.4px;height:1.1px;background:#d0d0d0"></div>
<div class="a" style="left:145.8px;top:563.0px;width:4.8px;height:1.1px;background:#d0d0d0"></div>
<div class="a" style="left:104.3px;top:566.7px;width:8.3px;height:1.1px;background:#d0d0d0"></div>
<div class="a" style="left:113.9px;top:566.7px;width:3.8px;height:1.1px;background:#d0d0d0"></div>
<div class="a" style="left:119.0px;top:566.7px;width:8.8px;height:1.1px;background:#d0d0d0"></div>
<div class="a" style="left:129.4px;top:566.7px;width:6.8px;height:1.1px;background:#d0d0d0"></div>
<div class="a" style="left:137.6px;top:566.7px;width:6.0px;height:1.1px;background:#d0d0d0"></div>
<div class="a" style="left:145.1px;top:566.7px;width:5.1px;height:1.1px;background:#d0d0d0"></div>
<div class="a" style="left:104.3px;top:570.3px;width:6.5px;height:1.1px;background:#d0d0d0"></div>
<div class="a" style="left:112.7px;top:570.3px;width:7.1px;height:1.1px;background:#d0d0d0"></div>
<div class="a" style="left:121.8px;top:570.3px;width:8.1px;height:1.1px;background:#d0d0d0"></div>
<div class="a" style="left:131.9px;top:570.3px;width:7.0px;height:1.1px;background:#d0d0d0"></div>
<div class="a" style="left:140.3px;top:570.3px;width:8.2px;height:1.1px;background:#d0d0d0"></div>
<div class="a" style="left:104.3px;top:573.9px;width:8.4px;height:1.1px;background:#d0d0d0"></div>
<div class="a" style="left:114.4px;top:573.9px;width:7.3px;height:1.1px;background:#d0d0d0"></div>
<div class="a" style="left:123.0px;top:573.9px;width:8.0px;height:1.1px;background:#d0d0d0"></div>
<div class="a" style="left:132.7px;top:573.9px;width:4.7px;height:1.1px;background:#d0d0d0"></div>
<div class="a" style="left:138.6px;top:573.9px;width:8.1px;height:1.1px;background:#d0d0d0"></div>
<div class="a" style="left:104.3px;top:577.5px;width:3.5px;height:1.1px;background:#d0d0d0"></div>
<div class="a" style="left:109.7px;top:577.5px;width:5.5px;height:1.1px;background:#d0d0d0"></div>
<div class="a" style="left:116.5px;top:577.5px;width:4.8px;height:1.1px;background:#d0d0d0"></div>
<div class="a" style="left:123.0px;top:577.5px;width:8.2px;height:1.1px;background:#d0d0d0"></div>
<div class="a" style="left:132.5px;top:577.5px;width:6.7px;height:1.1px;background:#d0d0d0"></div>
<div class="a" style="left:140.4px;top:577.5px;width:7.3px;height:1.1px;background:#d0d0d0"></div>
<div class="a" style="left:104.3px;top:581.1px;width:8.3px;height:1.1px;background:#d0d0d0"></div>
<div class="a" style="left:114.6px;top:581.1px;width:6.0px;height:1.1px;background:#d0d0d0"></div>
<div class="a" style="left:122.6px;top:581.1px;width:4.9px;height:1.1px;background:#d0d0d0"></div>
<div class="a" style="left:128.7px;top:581.1px;width:6.6px;height:1.1px;background:#d0d0d0"></div>
<div class="a" style="left:136.5px;top:581.1px;width:4.2px;height:1.1px;background:#d0d0d0"></div>
<div class="a" style="left:142.3px;top:581.1px;width:6.7px;height:1.1px;background:#d0d0d0"></div>
<div class="a" style="left:303px;top:121px;width:631px;height:463px;background:#fff;overflow:hidden">
<div class="a" style="left:160px;top:99.8px;width:310px;height:55px;background:#dde8fd"></div>
<div class="ital" style="top:-11.4px">ries.—The principal argument againſt the per-</div>
<div class="ital" style="top:8.6px">fectibility of man and of ſociety has never been</div>
<div class="ital" style="top:28.6px">fairly anſwered.—Nature of the difficulty aris-</div>
<div class="ital" style="top:48.6px">ing from population.—Outline of the principal</div>
<div class="ital" style="top:68.6px;text-align-last:left;letter-spacing:0.4px">argument of the Eſſay.</div>
<div class="body" style="top:106.40px"><span style="font-size:29.5px;line-height:0">T</span><span style="font-size:12px;letter-spacing:2.6px;margin-left:2.2px;line-height:0">HE</span> great and unlooked for diſcover-</div>
<div class="body" style="top:131.65px">ies that have taken place of late years</div>
<div class="body" style="top:156.90px">in natural philoſophy ; the increasing</div>
<div class="body" style="top:182.15px">diffusion of general knowledge from</div>
<div class="body" style="top:207.40px">the extension of the art of printing ;</div>
<div class="body" style="top:232.65px">the ardent and unſhackled ſpirit of in-</div>
<div class="body" style="top:257.90px">quiry that prevails throughout the let-</div>
<div class="body" style="top:283.15px">tered and even unlettered world, the</div>
<div class="body" style="top:308.40px">new and extraordinary lights that have</div>
<div class="a" style="left:67px;top:413px;width:31px;height:1.3px;background:#666"></div>
<div class="a" style="left:104.8px;top:421px;width:1.3px;height:31px;background:#666"></div>
<div class="a" style="left:533px;top:412.5px;width:31px;height:1.3px;background:#666"></div>
<div class="a" style="left:524.8px;top:421px;width:1.3px;height:31px;background:#666"></div>
</div>
<div class="a" style="left:54px;top:120px;width:970px;height:1px;background:#dce6fb"></div>
<svg width="330" height="70" style="left:455px;top:210px">
<rect x="8" y="7.5" width="1.2" height="35" fill="#5b8ff5"/><circle cx="8.6" cy="7.5" r="3.6" fill="#5b8ff5"/>
<rect x="317" y="43" width="1.2" height="26" fill="#5b8ff5"/><circle cx="317.7" cy="69" r="3.6" fill="#5b8ff5"/></svg>
<div class="a" style="left:452px;top:126.5px;width:332px;height:31.5px;border-radius:5px;border:1px solid #c9d8f7;background:#fff;box-shadow:0 1px 3px rgba(40,70,140,0.08)"></div>
<div class="a" style="left:540.5px;top:127.5px;width:1px;height:29.5px;background:#eeeeee"></div>
<div class="a" style="left:606px;top:127.5px;width:1px;height:29.5px;background:#eeeeee"></div>
<div class="a" style="left:642.5px;top:127.5px;width:1px;height:29.5px;background:#eeeeee"></div>
<div class="a" style="left:748px;top:127.5px;width:1px;height:29.5px;background:#eeeeee"></div>
<svg width="20" height="18" style="left:458.5px;top:133.5px">
<rect x="3.5" y="2.8" width="12.9" height="12.5" stroke="#444" stroke-width="0.9" fill="none"/>
<g fill="#111"><rect x="2" y="1.3" width="3" height="3"/><rect x="14.9" y="1.3" width="3" height="3"/><rect x="2" y="13.8" width="3" height="3"/><rect x="14.9" y="13.8" width="3" height="3"/></g>
<path d="M6.4 7V5.4H13.6V7M10 5.4V11.6M7.6 11.6H12.4" stroke="#444" stroke-width="1.05" fill="none"/></svg>
<div class="t" style="left:481.5px;top:134.5px;font-size:11px;line-height:14px;letter-spacing:-0.6px;color:#3a3a3a">Edit Text</div>
<svg width="14" height="14" style="left:520.6px;top:135.3px"><circle cx="7" cy="7" r="6.2" fill="#ffb700"/>
<path d="M3.8 5.2L5.4 6.6L7 4.4L8.6 6.6L10.2 5.2L9.6 9.6H4.4Z" fill="#111"/></svg>
<svg width="16" height="14" style="left:549px;top:135px" fill="#151515">
<rect x="1" y="3.1" width="6.5" height="0.9"/><rect x="8.5" y="1.5" width="6.6" height="3"/>
<rect x="1" y="6.3" width="14.1" height="3"/>
<rect x="1" y="11" width="7" height="3"/><rect x="9.7" y="12.1" width="5.4" height="0.9"/></svg>
<div class="t" style="left:569.5px;top:134.5px;font-size:11px;line-height:14px;letter-spacing:-0.85px;color:#3a3a3a">Redact</div>
<svg width="20" height="20" style="left:613px;top:132px">
<rect x="2.5" y="5.2" width="7.3" height="9" rx="1.3" fill="#1a1a1a"/>
<text x="6.15" y="12.7" font-family="Liberation Sans" font-weight="bold" font-size="7.6" fill="#fff" text-anchor="middle">A</text>
<path d="M11.5 2.8V17.6M10.2 2.8H12.8M10.2 17.6H12.8" stroke="#222" stroke-width="0.9" fill="none"/>
<text x="13.2" y="12.9" font-family="Liberation Sans" font-size="8.2" fill="#222">b</text></svg>
<svg width="20" height="20" style="left:649px;top:132px">
<text x="9.8" y="13.3" font-family="Liberation Sans" font-weight="bold" font-size="9.4" letter-spacing="-0.2" fill="#222" text-anchor="middle">Ab</text>
<rect x="3.6" y="15" width="12.3" height="1" fill="#222"/></svg>
<svg width="20" height="20" style="left:684px;top:132px">
<text x="10.3" y="13.3" font-family="Liberation Sans" font-weight="bold" font-size="9.4" letter-spacing="-0.2" fill="#4a4a4a" text-anchor="middle">Ab</text>
<rect x="3.2" y="9.6" width="14" height="1" fill="#4a4a4a"/></svg>
<div class="a" style="left:677px;top:127px;width:35px;height:30.5px;border:1.6px solid #e3262e"></div>
<svg width="20" height="20" style="left:720px;top:132px">
<text x="9.6" y="13.3" font-family="Liberation Sans" font-weight="bold" font-size="9.4" letter-spacing="-0.2" fill="#222" text-anchor="middle">Ab</text>
<path d="M3.3 16Q4.1 15 4.9 16T6.5 16T8.1 16T9.7 16T11.3 16T12.9 16T14.5 16T16.1 16" stroke="#333" stroke-width="0.8" fill="none"/></svg>
<svg width="16" height="16" style="left:757px;top:134px" stroke="#333" stroke-width="1.05" fill="none">
<rect x="4.8" y="2.2" width="9.4" height="9.4"/><path d="M2 5.5V14.5H11" stroke-dasharray="1.8 1.2"/></svg>
<svg width="1024" height="584" style="left:0;top:0"><path d="M701.8 159.2L716.3 168L712.4 170.1L819.6 336.4L818.4 337L706.2 173.3L703.6 175Z" fill="#e8202a"/></svg>
<div class="a" style="left:519px;top:541.7px;width:198px;height:30px;border-radius:15px;background:#1a2e66"></div>
<svg width="198" height="30" style="left:519px;top:541.7px" stroke="#fff" stroke-width="1.2" fill="none">
<path d="M23 11L19.5 15L23 19"/><path d="M99 11L102.5 15L99 19"/>
<circle cx="126.3" cy="15" r="6"/><path d="M123 15H129.6"/>
<circle cx="152" cy="15" r="6"/><path d="M148.7 15H155.3M152 11.7V18.3"/>
<path d="M171 11.2V18.8M182.5 11.2V18.8M173 15H180.5" stroke-width="1.1"/><path d="M172.5 15L175 13V17Z M181 15L178.5 13V17Z" fill="#fff" stroke="none"/></svg>
<div class="a" style="left:554.5px;top:548px;width:23.5px;height:17.5px;border-radius:3px;background:#475785"></div>
<div class="t" style="left:554.5px;top:549.5px;width:23.5px;text-align:center;font-size:12px;line-height:14px;letter-spacing:-0.3px;color:#fff">16</div>
<div class="t" style="left:580.5px;top:549.5px;font-size:12px;line-height:14px;letter-spacing:-0.4px;color:#fff">/ 408</div>
</body></html>
